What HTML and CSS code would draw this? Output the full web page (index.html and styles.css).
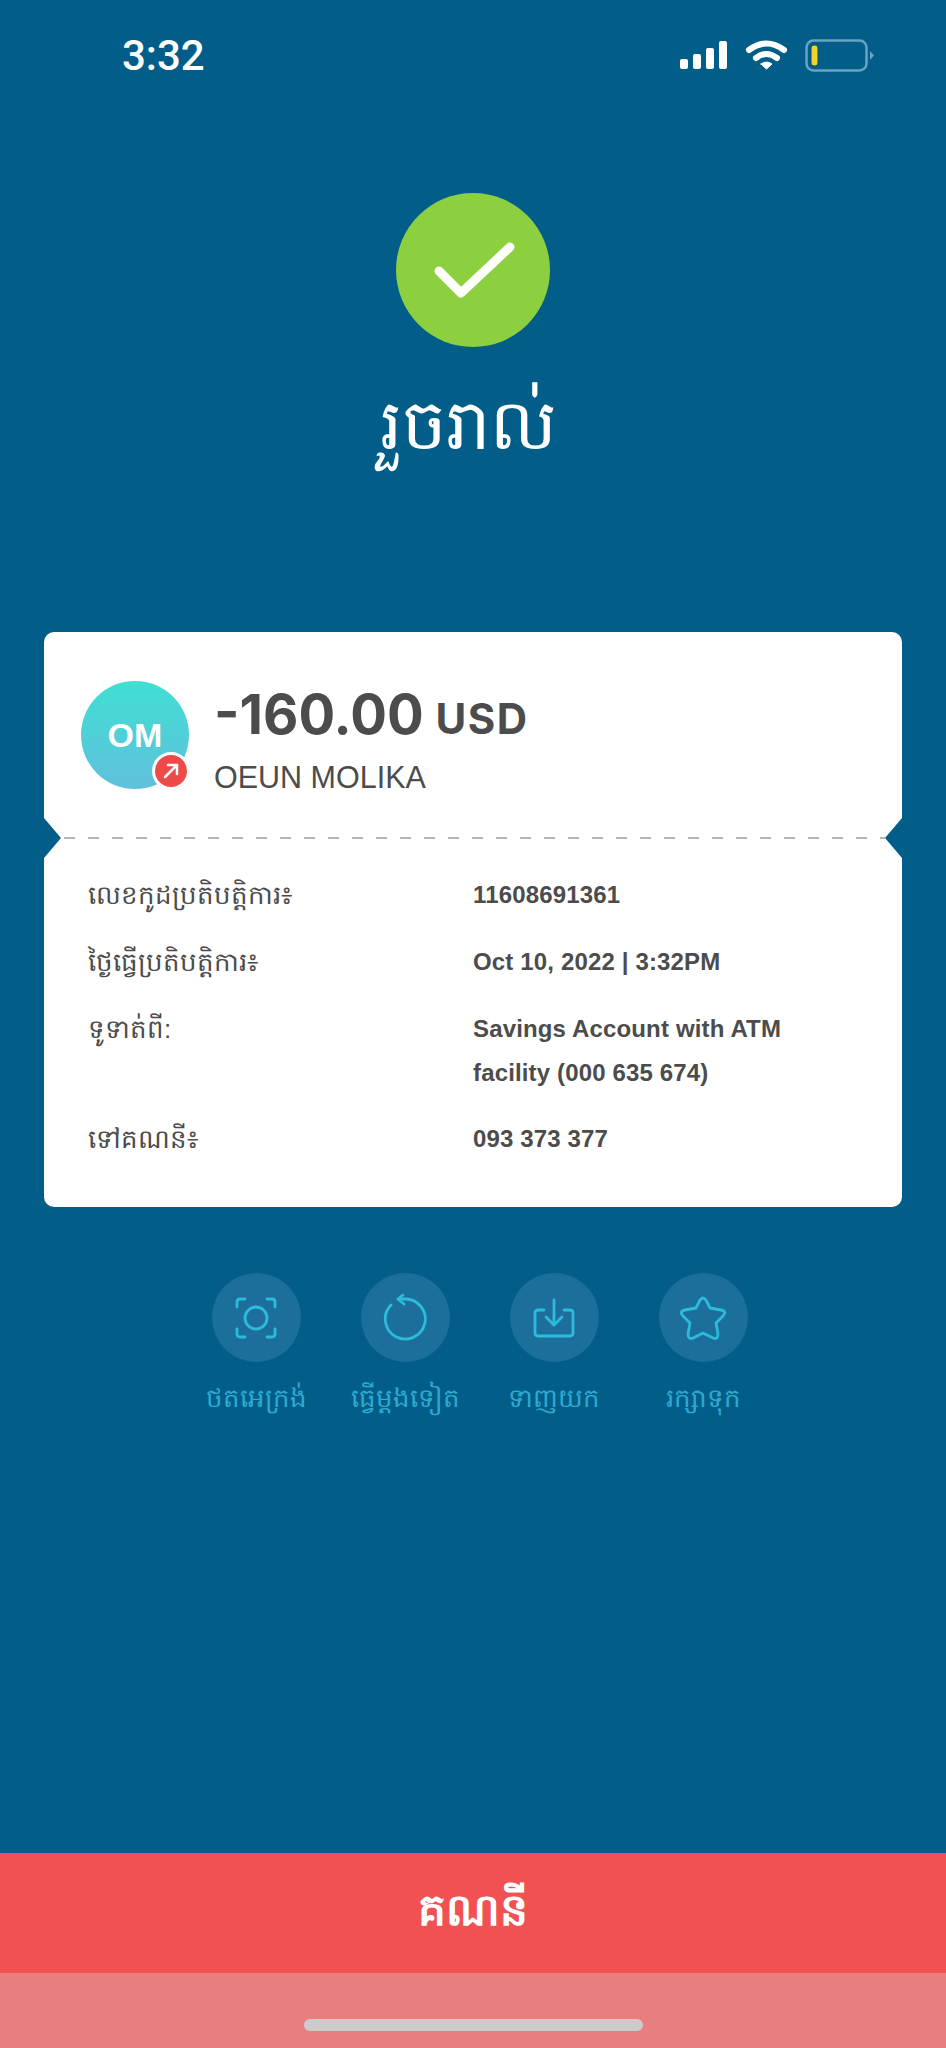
FILE: index.html
```html
<!DOCTYPE html>
<html lang="km">

<head>
  <meta charset="UTF-8">
  <meta name="viewport" content="width=device-width, initial-scale=1">
  <title>Transfer done</title>
  <link rel="stylesheet" href="styles.css">
</head>

<body>

  <div class="status">
    <span class="time">3:32</span>
    <div class="status-icons">
      <svg width="48" height="28" viewBox="0 0 48 28" fill="#fff">
        <rect x="0" y="18" width="8" height="10" rx="2" />
        <rect x="13" y="13" width="8" height="15" rx="2" />
        <rect x="26" y="7" width="8" height="21" rx="2" />
        <rect x="39" y="0" width="8" height="28" rx="2" />
      </svg>
      <svg width="43" height="30" viewBox="0 0 43 30" fill="none" stroke="#fff" stroke-width="6" stroke-linecap="round">
        <path d="M4 10 Q21.500 -3 39 10" />
        <path d="M11 18 Q21.500 10 32 18" />
        <path d="M16 24 L21.500 29 L27 24 Q21.500 20 16 24 Z" fill="#fff" stroke-width="1" />
      </svg>
      <svg width="69" height="33" viewBox="0 0 69 33">
        <rect x="1.500" y="1.500" width="60" height="30" rx="7" fill="none" stroke="#6aa3c4" stroke-width="2.500" />
        <rect x="6" y="6" width="7" height="21" rx="3" fill="#f1d32d" stroke="#0d4d6d" stroke-width="1" />
        <path d="M65 12 L69 16.500 L65 21 Z" fill="#6aa3c4" />
      </svg>
    </div>
  </div>

  <div class="hero">
    <div class="check">
      <svg width="154" height="154" viewBox="0 0 154 154" fill="none" stroke="#fff" stroke-width="9" stroke-linecap="round" stroke-linejoin="round">
        <path d="M43 78 L65 100 L114 54" />
      </svg>
    </div>
    <h1>រួចរាល់</h1>
  </div>

  <div class="card">
    <div class="payee">
      <div class="avatar">OM
        <span class="badge">
          <svg width="18" height="18" viewBox="0 0 18 18" fill="none" stroke="#fff" stroke-width="2.500" stroke-linecap="round" stroke-linejoin="round">
            <path d="M3 15 L15 3" />
            <path d="M6 3 H15 V12" />
          </svg>
        </span>
      </div>
      <div class="payee-text">
        <div class="amount">-160.00 <span class="currency">USD</span></div>
        <div class="name">OEUN MOLIKA</div>
      </div>
    </div>

    <div class="tear">
      <span class="notch notch-left"></span>
      <span class="notch notch-right"></span>
    </div>

    <div class="details">
      <div class="row">
        <div class="label">លេខកូដប្រតិបត្តិការ៖</div>
        <div class="value">11608691361</div>
      </div>
      <div class="row">
        <div class="label">ថ្ងៃធ្វើប្រតិបត្តិការ៖</div>
        <div class="value">Oct 10, 2022 | 3:32PM</div>
      </div>
      <div class="row">
        <div class="label">ទូទាត់ពី:</div>
        <div class="value">Savings Account with ATM<br>facility (000 635 674)</div>
      </div>
      <div class="row">
        <div class="label">ទៅគណនី៖</div>
        <div class="value">093 373 377</div>
      </div>
    </div>
  </div>

  <div class="actions">
    <div class="action">
      <div class="action-icon">
        <svg width="42" height="42" viewBox="0 0 42 42" fill="none" stroke="#2dbbdc" stroke-width="2.800" stroke-linecap="round" stroke-linejoin="round">
          <path d="M2 10 V5 Q2 2 5 2 H10" />
          <path d="M32 2 H37 Q40 2 40 5 V10" />
          <path d="M40 32 V37 Q40 40 37 40 H32" />
          <path d="M10 40 H5 Q2 40 2 37 V32" />
          <circle cx="21" cy="21" r="11" />
        </svg>
      </div>
      <span>ថតអេក្រង់</span>
    </div>
    <div class="action">
      <div class="action-icon">
        <svg width="44" height="48" viewBox="0 0 44 48" fill="none" stroke="#2dbbdc" stroke-width="2.800" stroke-linecap="round" stroke-linejoin="round">
          <path d="M8 11 A20 20 0 1 0 22 5 L16 5" />
          <path d="M20 1 L15 5 L21 10" />
        </svg>
      </div>
      <span>ធ្វើម្តងទៀត</span>
    </div>
    <div class="action">
      <div class="action-icon">
        <svg width="42" height="40" viewBox="0 0 42 40" fill="none" stroke="#2dbbdc" stroke-width="2.800" stroke-linecap="round" stroke-linejoin="round">
          <path d="M11 12 H5 Q2 12 2 15 V35 Q2 38 5 38 H37 Q40 38 40 35 V15 Q40 12 37 12 H31" />
          <path d="M21 2 V27" />
          <path d="M13 19 L21 27 L29 19" />
        </svg>
      </div>
      <span>ទាញយក</span>
    </div>
    <div class="action">
      <div class="action-icon">
        <svg width="46" height="44" viewBox="0 0 46 44" fill="none" stroke="#2dbbdc" stroke-width="2.800" stroke-linecap="round" stroke-linejoin="round">
          <path d="M20 4 Q23 0 26 4 L30 12 L41 14 Q47 15 43 20 L36 27 L38 38 Q38 44 33 42 L23 37 L13 42 Q8 44 8 38 L10 27 L3 20 Q-1 15 5 14 L16 12 Z" />
        </svg>
      </div>
      <span>រក្សាទុក</span>
    </div>
  </div>

  <div class="bottom">
    <div class="account-btn">គណនី</div>
    <div class="home-area">
      <div class="home-bar"></div>
    </div>
  </div>

</body>

</html>
```

FILE: styles.css
```css
body {
  margin: 0;
  width: 946px;
  height: 2048px;
  display: flex;
  flex-direction: column;
  background: #025e89;
  color: #4c4c4c;
  font-family: "Liberation Sans", "Noto Sans", sans-serif;
  overflow: hidden;
}

/* status bar */
.status {
  display: flex;
  justify-content: space-between;
  align-items: center;
  height: 110px;
  padding: 0 72px 0 122px;
  box-sizing: border-box;
  color: #fff;
}

.time {
  font-family: Roboto, sans-serif;
  font-size: 42px;
  font-weight: 500;
}

.status-icons {
  display: flex;
  align-items: center;
  gap: 17px;
}

/* success header */
.hero {
  display: flex;
  flex-direction: column;
  align-items: center;
  padding-top: 83px;
  height: 522px;
  box-sizing: border-box;
}

.check {
  width: 154px;
  height: 154px;
  border-radius: 50%;
  background: #8ccf3f;
}

h1 {
  margin: 28px 10px 0 0;
  color: #fff;
  font-size: 70px;
  font-weight: normal;
  line-height: 100px;
}

/* card */
.card {
  margin: 0 44px;
  height: 575px;
  background: #fff;
  border-radius: 10px;
}

.payee {
  display: flex;
  align-items: center;
  height: 205px;
  padding: 0 37px;
  gap: 25px;
  box-sizing: border-box;
}

.avatar {
  position: relative;
  flex: none;
  width: 108px;
  height: 108px;
  border-radius: 50%;
  background: linear-gradient(#3fdfd3, #60c0dc);
  color: #fff;
  font-size: 34px;
  font-weight: bold;
  line-height: 108px;
  text-align: center;
}

.badge {
  position: absolute;
  right: -1px;
  bottom: -1px;
  width: 32px;
  height: 32px;
  display: flex;
  align-items: center;
  justify-content: center;
  border: 3px solid #fff;
  border-radius: 50%;
  background: #ee4a4a;
}

.payee-text {
  padding-top: 7px;
}

.amount {
  font-family: Inter, "Liberation Sans", sans-serif;
  font-size: 54.500px;
  font-weight: 700;
  line-height: 70px;
  white-space: nowrap;
}

.currency {
  margin-left: -1px;
  font-size: 42px;
  letter-spacing: 1.500px;
}

.name {
  margin-top: 3px;
  font-size: 30.500px;
  line-height: 40px;
}

/* dashed tear line with the two cut-outs */
.tear {
  position: relative;
  margin-left: 20px;
  margin-right: 17px;
  height: 2px;
  background: repeating-linear-gradient(90deg, #b5b5b5 0 11px, transparent 11px 24px);
}

.notch {
  position: absolute;
  top: -19px;
  width: 17px;
  height: 40px;
  background: #025e89;
}

.notch-left {
  left: -20px;
  clip-path: polygon(0 0, 100% 50%, 0 100%);
}

.notch-right {
  right: -17px;
  clip-path: polygon(100% 0, 0 50%, 100% 100%);
}

.details {
  padding: 34px 44px 0;
}

.row {
  display: flex;
  margin-bottom: 23px;
}

.label {
  flex: none;
  width: 385px;
  font-size: 26px;
  line-height: 44px;
}

.value {
  font-size: 24px;
  font-weight: bold;
  letter-spacing: 0.150px;
  line-height: 43.500px;
}

/* round actions */
.actions {
  display: flex;
  justify-content: center;
  margin-top: 66px;
  padding-left: 13px;
}

.action {
  width: 149px;
  display: flex;
  flex-direction: column;
  align-items: center;
  color: #2fa9cf;
  font-size: 26px;
}

.action span {
  margin-top: 14px;
  line-height: 44px;
  white-space: nowrap;
}

.action-icon {
  width: 89px;
  height: 89px;
  display: flex;
  align-items: center;
  justify-content: center;
  border-radius: 50%;
  background: #1d6f9b;
}

/* bottom button */
.bottom {
  margin-top: auto;
}

.account-btn {
  height: 120px;
  background: #f15152;
  color: #fff;
  font-size: 44px;
  font-weight: bold;
  line-height: 114px;
  text-align: center;
}

.home-area {
  display: flex;
  justify-content: center;
  height: 75px;
  padding-top: 46px;
  box-sizing: border-box;
  background: #e87f7f;
}

.home-bar {
  width: 339px;
  height: 12px;
  border-radius: 6px;
  background: #cbcbcb;
}
```
